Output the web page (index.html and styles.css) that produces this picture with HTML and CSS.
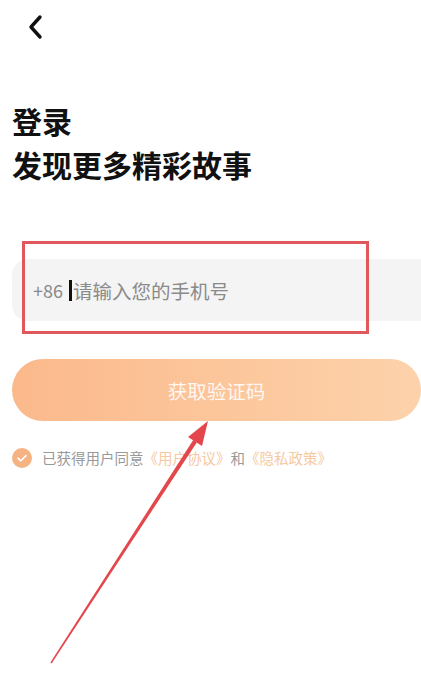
FILE: index.html
```html
<!DOCTYPE html>
<html>
<head>
   <meta charset="utf-8">
   <title>登录</title>
   <link rel="stylesheet" href="styles.css">
</head>
<body>
<div class="page">
   <div class="top-bar">
      <svg class="back" width="16" height="26" viewBox="0 0 16 26">
         <path d="M13 3 L4 13 L13 23" fill="none" stroke="#111" stroke-width="3.4" stroke-linecap="round" stroke-linejoin="round"/>
      </svg>
   </div>

   <div class="heading">
      <h1>登录</h1>
      <h2>发现更多精彩故事</h2>
   </div>

   <div class="phone-row">
      <span class="prefix">+86</span>
      <span class="caret"></span>
      <span class="placeholder">请输入您的手机号</span>
      <div class="mark-box"></div>
   </div>

   <div class="code-btn">获取验证码</div>

   <div class="agree">
      <span class="check">
         <svg width="20" height="20" viewBox="0 0 20 20">
            <circle cx="10" cy="10" r="10" fill="#f5b282"/>
            <path d="M6 10.2 L8.8 12.8 L14 7.6" fill="none" stroke="#fff" stroke-width="1.6" stroke-linecap="round" stroke-linejoin="round"/>
         </svg>
      </span>
      <span class="agree-text">已获得用户同意<a>《用户协议》</a>和<a>《隐私政策》</a></span>
   </div>
</div>

<svg class="arrow" width="421" height="694" viewBox="0 0 421 694">
   <path d="M50.4 662.6 L193.2 440.1 L196.8 442.4 L51.6 663.4 Z" fill="#e3474b"/>
   <path d="M208 421 L202 446 L188 437 Z" fill="#e3474b"/>
</svg>
</body>
</html>
```

FILE: styles.css
```css
body {
      margin: 0;
      font-family: "Noto Sans CJK SC", "Noto Sans", sans-serif;
      background: #fff;
      width: 421px;
      height: 694px;
      overflow: hidden;
      position: relative;
}

.page {
      padding: 0 0 0 12px;
}

.top-bar {
      height: 56px;
      padding: 14px 0 0 15px;
      box-sizing: border-box;
}

.back {
      display: block;
}

.heading {
      margin-top: 42px;
}

.heading h1,
.heading h2 {
      margin: 0;
      font-size: 30px;
      font-weight: bold;
      color: #111;
      line-height: 44px;
}

.phone-row {
      position: relative;
      margin-top: 73px;
      height: 62px;
      background: #f4f4f4;
      border-radius: 16px 0 0 16px;
      display: flex;
      align-items: center;
      padding-left: 21px;
      font-size: 18px;
      color: #8a8a8a;
}

.prefix {
      margin-right: 6px;
}

.caret {
      width: 3px;
      height: 21px;
      background: #111;
      margin-right: 1px;
}

.placeholder {
      font-size: 19.5px;
}

.mark-box {
      position: absolute;
      left: 10px;
      top: -18px;
      width: 341px;
      height: 87px;
      border: 3px solid #e0585b;
}

.code-btn {
      margin-top: 38px;
      height: 62px;
      width: 409px;
      border-radius: 31px;
      background: linear-gradient(90deg, #fbb98b, #fdd2ab);
      color: rgba(255, 255, 255, 0.88);
      font-size: 19.5px;
      display: flex;
      align-items: center;
      justify-content: center;
}

.agree {
      margin-top: 26px;
      display: flex;
      align-items: center;
      font-size: 14.5px;
      color: #999;
}

.check {
      display: flex;
      margin-right: 10px;
}

.agree a {
      color: #f6c9a2;
}

.arrow {
      position: absolute;
      left: 0;
      top: 0;
      pointer-events: none;
}
```
